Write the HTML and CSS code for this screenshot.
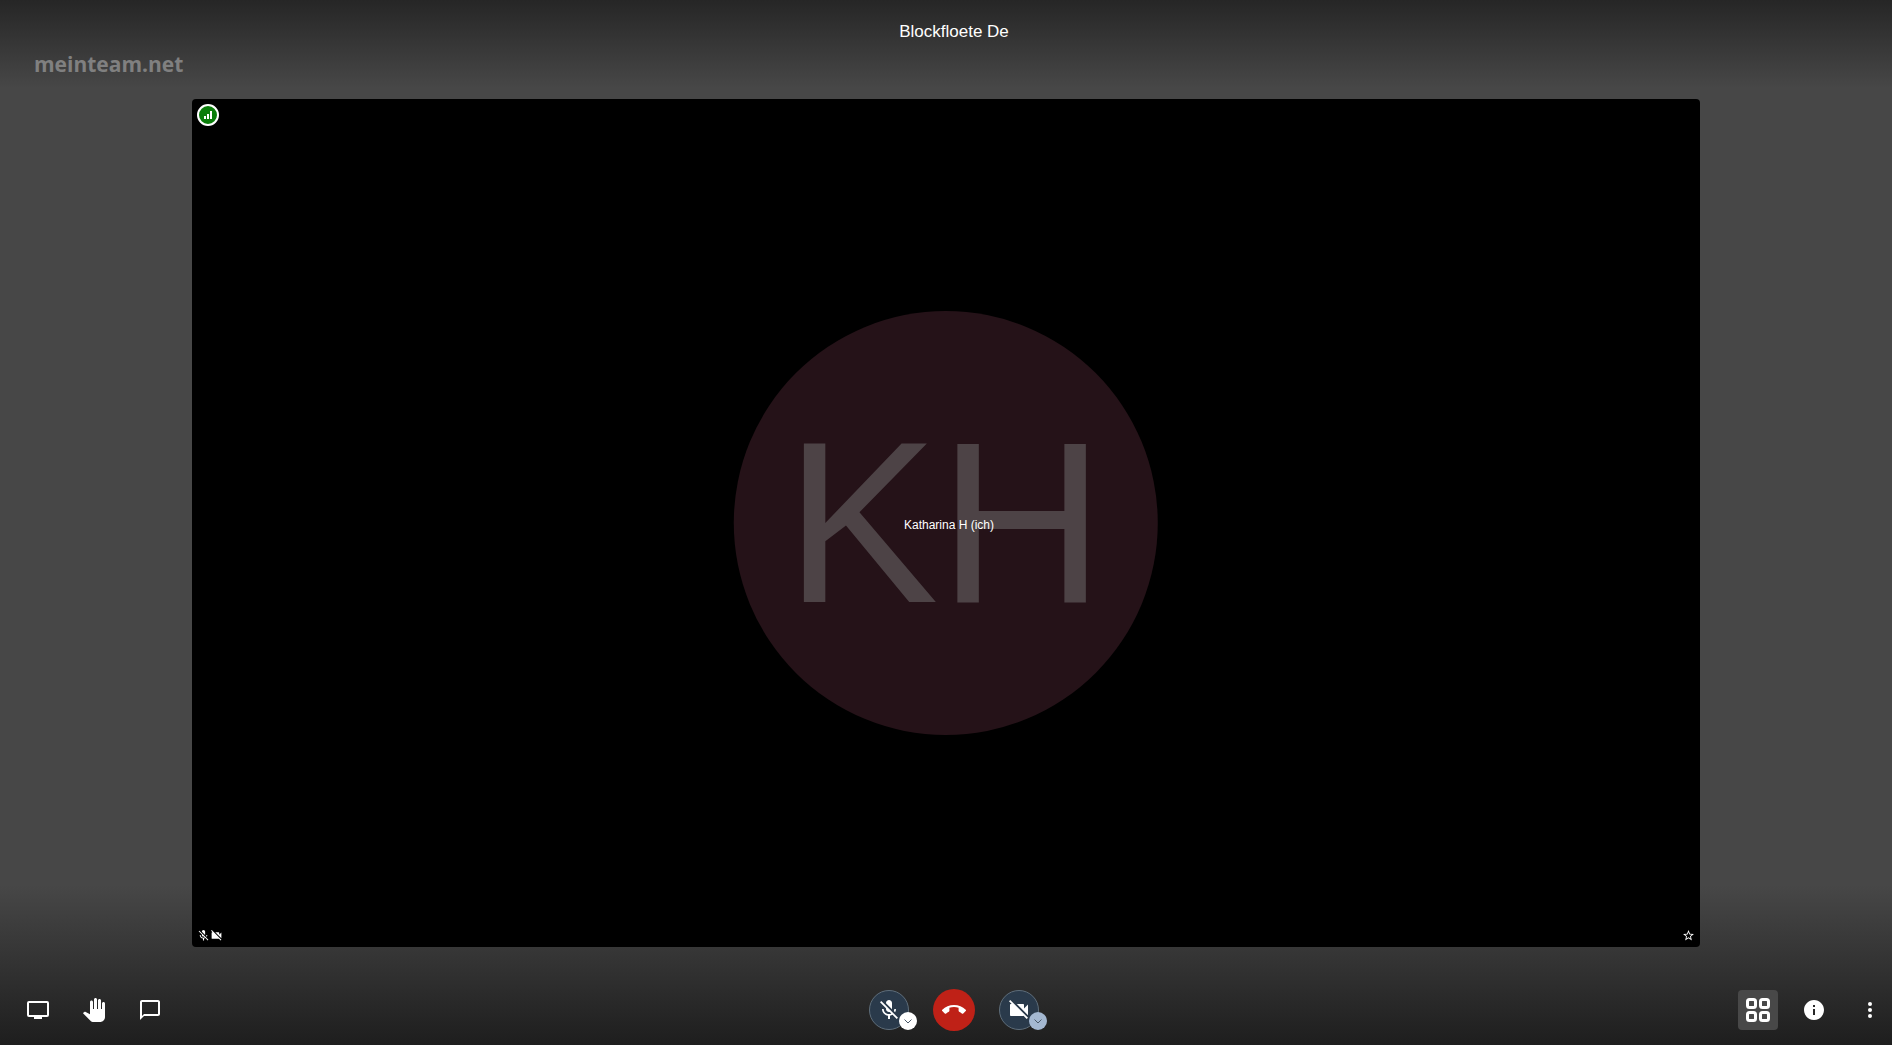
FILE: index.html
```html
<!DOCTYPE html>
<html lang="de">
<head>
	<meta charset="utf-8">
	<title>Blockfloete De</title>
	<link rel="stylesheet" href="styles.css">
</head>
<body>
	<header>
		<h1 class="subject">Blockfloete De</h1>
		<a class="watermark" href="#">meinteam.net</a>
	</header>
	<main>
		<section class="tile">
			<div class="tile-top">
				<span class="signal">
					<svg width="10" height="10" viewBox="0 0 10 10"><path d="M1 6h2v3H1zM4 4h2v5H4zM7 1h2v8H7z"/></svg>
				</span>
			</div>
			<svg class="avatar" viewBox="0 0 424 424">
				<circle cx="212" cy="212" r="212"/>
				<text x="211" y="291" text-anchor="middle">KH</text>
			</svg>
			<span class="name">Katharina H (ich)</span>
			<div class="tile-bottom">
				<svg width="13" height="13" viewBox="0 0 24 24"><path d="M19 11h-1.700c0 .740-.160 1.430-.430 2.050l1.230 1.230c.560-.980.900-2.090.900-3.280zm-4.020.170c0-.060.020-.110.020-.170V5c0-1.660-1.340-3-3-3S9 3.340 9 5v.180l5.980 5.990zM4.270 3L3 4.270l6.010 6.010V11c0 1.660 1.330 3 2.990 3 .220 0 .440-.030.650-.080l1.660 1.660c-.710.330-1.500.520-2.310.520-2.760 0-5.300-2.100-5.300-5.100H5c0 3.410 2.720 6.230 6 6.720V21h2v-3.280c.910-.130 1.770-.450 2.540-.900L19.730 21 21 19.730 4.270 3z"/></svg>
				<svg width="13" height="13" viewBox="0 0 24 24"><path d="M21 6.500l-4 4V7c0-.550-.450-1-1-1H9.820L21 17.180V6.500zM3.270 2L2 3.270 4.730 6H4c-.550 0-1 .450-1 1v10c0 .550.450 1 1 1h12c.210 0 .390-.080.540-.180L19.730 21 21 19.730 3.270 2z"/></svg>
				<svg class="star" width="13" height="13" viewBox="0 0 24 24"><path d="M22 9.240l-7.190-.620L12 2 9.190 8.630 2 9.240l5.460 4.730L5.820 21 12 17.270 18.180 21l-1.630-7.030L22 9.240zM12 15.400l-3.760 2.270 1-4.280-3.320-2.880 4.380-.380L12 6.100l1.710 4.040 4.380.380-3.320 2.880 1 4.280L12 15.400z"/></svg>
			</div>
		</section>
	</main>
	<footer>
		<div class="group">
			<button class="btn" type="button" aria-label="Bildschirm teilen">
				<svg width="24" height="24" viewBox="0 0 24 24"><path fill-rule="evenodd" d="M3 3h18a2 2 0 0 1 2 2v12a2 2 0 0 1-2 2h-5v2H8v-2H3a2 2 0 0 1-2-2V5a2 2 0 0 1 2-2zm0 2v12h18V5z"/></svg>
			</button>
			<button class="btn" type="button" aria-label="Hand heben">
				<svg width="24" height="24" viewBox="0 0 24 24"><path d="M23 5.500V19c0 2.800-2.200 5-5 5h-6.300c-1.300 0-2.600-.500-3.500-1.500L1 15.200s1.200-1.200 1.300-1.200c.200-.200.500-.300.800-.300.200 0 .400.100.600.200L8 16.300V4c0-.800.700-1.500 1.500-1.500S11 3.200 11 4v7h1V1.500c0-.800.700-1.500 1.500-1.500S15 .700 15 1.500V11h1V2.500c0-.800.700-1.500 1.500-1.500s1.500.700 1.500 1.500V11h1V5.500c0-.800.700-1.500 1.500-1.500s1.500.700 1.500 1.500z"/></svg>
			</button>
			<button class="btn" type="button" aria-label="Chat">
				<svg width="24" height="24" viewBox="0 0 24 24"><path d="M20 2H4c-1.100 0-2 .900-2 2v18l4-4h14c1.100 0 2-.900 2-2V4c0-1.100-.900-2-2-2zm0 14H6l-2 2V4h16v12z"/></svg>
			</button>
		</div>
		<div class="group center">
			<div class="device">
				<button class="btn round" type="button" aria-label="Mikrofon">
					<svg width="24" height="24" viewBox="0 0 24 24"><path d="M19 11h-1.700c0 .740-.160 1.430-.430 2.050l1.230 1.230c.560-.980.900-2.090.900-3.280zm-4.020.170c0-.060.020-.110.020-.170V5c0-1.660-1.340-3-3-3S9 3.340 9 5v.180l5.980 5.990zM4.270 3L3 4.270l6.010 6.010V11c0 1.660 1.330 3 2.990 3 .220 0 .440-.030.650-.080l1.660 1.660c-.710.330-1.500.520-2.310.520-2.760 0-5.300-2.100-5.300-5.100H5c0 3.410 2.720 6.230 6 6.720V21h2v-3.280c.910-.130 1.770-.450 2.540-.900L19.730 21 21 19.730 4.270 3z"/></svg>
				</button>
				<button class="arrow" type="button" aria-label="Audioeinstellungen">
					<svg width="10" height="10" viewBox="0 0 10 10"><path d="M1.500 3.500L5 7l3.500-3.500"/></svg>
				</button>
			</div>
			<button class="btn hangup" type="button" aria-label="Verlassen">
				<svg width="24" height="24" viewBox="0 0 24 24"><path d="M12 9c-1.600 0-3.150.250-4.600.720v3.100c0 .390-.230.740-.560.900-.980.490-1.870 1.120-2.660 1.850-.180.180-.430.280-.700.280-.280 0-.530-.110-.710-.290L.290 13.080c-.180-.170-.290-.420-.290-.700 0-.280.110-.530.290-.710C3.340 8.780 7.460 7 12 7s8.660 1.780 11.710 4.670c.180.180.290.430.290.710 0 .280-.110.530-.290.710l-2.480 2.480c-.180.180-.430.290-.710.290-.270 0-.520-.110-.700-.280-.790-.740-1.690-1.360-2.670-1.850-.330-.160-.560-.500-.560-.900v-3.100C15.150 9.250 13.600 9 12 9z"/></svg>
			</button>
			<div class="device">
				<button class="btn round" type="button" aria-label="Kamera">
					<svg width="24" height="24" viewBox="0 0 24 24"><path d="M21 6.500l-4 4V7c0-.550-.450-1-1-1H9.820L21 17.180V6.500zM3.270 2L2 3.270 4.730 6H4c-.550 0-1 .450-1 1v10c0 .550.450 1 1 1h12c.210 0 .390-.080.540-.180L19.730 21 21 19.730 3.270 2z"/></svg>
				</button>
				<button class="arrow disabled" type="button" aria-label="Videoeinstellungen">
					<svg width="10" height="10" viewBox="0 0 10 10"><path d="M1.500 3.500L5 7l3.500-3.500"/></svg>
				</button>
			</div>
		</div>
		<div class="group right">
			<button class="btn active" type="button" aria-label="Kachelansicht">
				<svg class="outline" width="24" height="24" viewBox="0 0 24 24"><rect x="1.500" y="1.500" width="8" height="8" rx="2"/><rect x="14.500" y="1.500" width="8" height="8" rx="2"/><rect x="1.500" y="14.500" width="8" height="8" rx="2"/><rect x="14.500" y="14.500" width="8" height="8" rx="2"/></svg>
			</button>
			<button class="btn" type="button" aria-label="Info">
				<svg width="24" height="24" viewBox="0 0 24 24"><path d="M12 2C6.480 2 2 6.480 2 12s4.480 10 10 10 10-4.480 10-10S17.520 2 12 2zm1 15h-2v-6h2v6zm0-8h-2V7h2v2z"/></svg>
			</button>
			<button class="btn" type="button" aria-label="Weitere Optionen">
				<svg width="24" height="24" viewBox="0 0 24 24"><circle cx="12" cy="6" r="2"/><circle cx="12" cy="12" r="2"/><circle cx="12" cy="18" r="2"/></svg>
			</button>
		</div>
	</footer>
</body>
</html>
```
FILE: styles.css
```css
body{
	margin:0;
	display: grid;
	grid-template-rows: 99px 1fr 98px;
	height: 100vh;
	overflow: hidden;
	font-family: "Liberation Sans", Arial, sans-serif;
	color: white;
	background-color: #474747;
	background-image: linear-gradient(#262626, rgba(38,38,38,0)), linear-gradient(rgba(30,30,30,0), #1e1e1e);
	background-size: 100% 88px, 100% 160px;
	background-position: top, bottom;
	background-repeat: no-repeat;
}
svg{
	display: block;
	fill: white;
}
button{
	padding:0;
	border:0;
	cursor: pointer;
}
header{
	display: flex;
	flex-direction: column;
}
.subject{
	margin:0;
	padding: 20px 0 0 16px;
	font-size: 17px;
	font-weight: normal;
	line-height: 24px;
	text-align: center;
}
.watermark{
	align-self: flex-start;
	margin-left: 34px;
	padding-top: 4px;
	font-family: "Open Sans", sans-serif;
	font-size: 21px;
	font-weight: bold;
	line-height: 32px;
	color: #808080;
	text-decoration: none;
}
main{
	display: flex;
	justify-content: center;
	min-height: 0;
}
/*video tile*/
.tile{
	position: relative;
	display: flex;
	flex-direction: column;
	justify-content: space-between;
	box-sizing: border-box;
	height: 100%;
	aspect-ratio: 16 / 9;
	padding: 5px;
	border-radius: 4px;
	background-color: black;
}
.signal{
	display: flex;
	align-items: center;
	justify-content: center;
	box-sizing: border-box;
	width: 22px;
	height: 22px;
	border: 2px solid white;
	border-radius: 50%;
	background-color: #0a7d0a;
}
.avatar{
	position: absolute;
	top: 25%;
	left: 0;
	width: 100%;
	height: 50%;
}
.avatar circle{
	fill: #251218;
}
.avatar text{
	fill: #4d4346;
	font-size: 230px;
}
.name{
	position: absolute;
	top: 50%;
	left: 0;
	width: 100%;
	box-sizing: border-box;
	padding-left: 6px;
	font-size: 12px;
	line-height: 4px;
	text-align: center;
}
.tile-bottom{
	display: flex;
	align-items: center;
}
.star{
	margin-left: auto;
}
/*toolbar*/
footer{
	display: grid;
	grid-template-columns: 1fr auto 1fr;
	align-items: center;
	padding: 28px 2px 0 18px;
}
.group{
	display: flex;
	align-items: center;
	gap: 16px;
}
.center{
	gap: 24px;
}
.right{
	justify-content: flex-end;
}
.btn{
	display: flex;
	align-items: center;
	justify-content: center;
	width: 40px;
	height: 40px;
	border-radius: 4px;
	background-color: transparent;
}
.active{
	background-color: #484848;
}
.outline{
	fill: none;
	stroke: white;
	stroke-width: 3;
}
.device{
	position: relative;
}
.round{
	box-sizing: border-box;
	border: 1px solid #5e6d7a;
	border-radius: 50%;
	background-color: #2a3a4b;
}
.hangup{
	width: 42px;
	height: 42px;
	border-radius: 50%;
	background-color: #bf2117;
}
.arrow{
	position: absolute;
	right: -8px;
	bottom: 0;
	display: flex;
	align-items: center;
	justify-content: center;
	width: 18px;
	height: 18px;
	border-radius: 50%;
	background-color: white;
}
.arrow svg{
	fill: none;
	stroke: #4a5a6a;
}
.disabled{
	background-color: #a4b8d1;
}
```
